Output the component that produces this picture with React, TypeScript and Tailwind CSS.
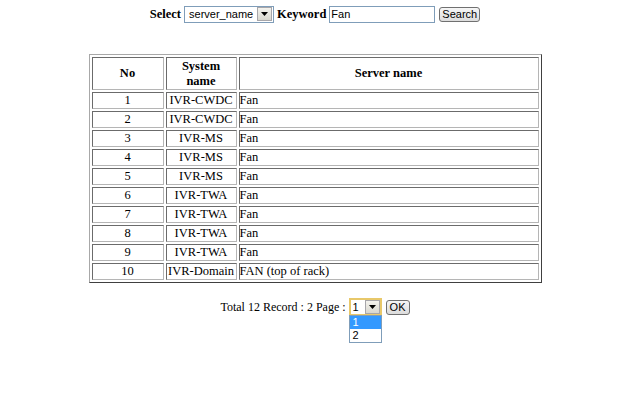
import React from "react";

const rows = [
  { no: 1, system: "IVR-CWDC", server: "Fan" },
  { no: 2, system: "IVR-CWDC", server: "Fan" },
  { no: 3, system: "IVR-MS", server: "Fan" },
  { no: 4, system: "IVR-MS", server: "Fan" },
  { no: 5, system: "IVR-MS", server: "Fan" },
  { no: 6, system: "IVR-TWA", server: "Fan" },
  { no: 7, system: "IVR-TWA", server: "Fan" },
  { no: 8, system: "IVR-TWA", server: "Fan" },
  { no: 9, system: "IVR-TWA", server: "Fan" },
  { no: 10, system: "IVR-Domain", server: "FAN (top of rack)" },
];

// small XP style drop arrow button used by the select boxes
const DropButton = () => (
  <div className="flex h-[14px] w-[15px] items-center justify-center border border-[#a7a6aa] bg-gradient-to-b from-[#f4f3ee] to-[#d8d7cf]">
    <svg width="7" height="4" viewBox="0 0 7 4">
      <path d="M0 0h7L3.5 4z" fill="#000" />
    </svg>
  </div>
);

const cell =
  "border border-t-[#6b6b6b] border-l-[#6b6b6b] border-b-[#b5b5b5] border-r-[#b5b5b5] p-0 leading-[15px]";

export default function App() {
  return (
    <div className="h-[395px] w-[644px] bg-white text-[12px] text-black" style={{ fontFamily: '"Liberation Serif", serif' }}>
      <div className="w-[630px]">
        {/* search form */}
        <div className="flex items-center justify-center pt-[5px] h-[23px]">
          <b className="mr-[3px] text-[12.5px]">Select</b>
          <div className="flex h-[17px] w-[90px] items-center justify-between border border-[#7f9db9] bg-white pl-[4px] pr-[1px]">
            <span className="text-[11px]" style={{ fontFamily: '"Liberation Sans", sans-serif' }}>server_name</span>
            <DropButton />
          </div>
          <b className="mx-[3px] text-[12.5px]">Keyword</b>
          <div className="flex h-[17px] w-[106px] items-center border border-[#7f9db9] bg-white pl-[1px]">
            <span className="text-[11px]" style={{ fontFamily: '"Liberation Sans", sans-serif' }}>Fan</span>
          </div>
          <div
            className="ml-[4px] flex h-[15px] items-center rounded-[3px] border border-[#707070] bg-gradient-to-b from-[#f6f6f6] to-[#dcdcdc] px-[2px] text-[11px]"
            style={{ fontFamily: '"Liberation Sans", sans-serif' }}
          >
            Search
          </div>
        </div>

        {/* results table */}
        <div className="mt-[31px] flex justify-center">
          <table className="w-[453px] border-separate border-spacing-[2px] border border-t-[#a8a8a8] border-l-[#a8a8a8] border-b-[#404040] border-r-[#404040] text-[12.5px]">
            <thead>
              <tr className="h-[33px]">
                <th className={`${cell} w-[72px] font-bold`}>No</th>
                <th className={`${cell} w-[71px] font-bold leading-[15px]`}>
                  System
                  <br />
                  name
                </th>
                <th className={`${cell} font-bold`}>Server name</th>
              </tr>
            </thead>
            <tbody>
              {rows.map((r) => (
                <tr key={r.no} className="h-[17px]">
                  <td className={`${cell} text-center`}>{r.no}</td>
                  <td className={`${cell} text-center`}>{r.system}</td>
                  <td className={`${cell} text-left`}>{r.server}</td>
                </tr>
              ))}
            </tbody>
          </table>
        </div>

        {/* paging */}
        <div className="mt-[15px] flex items-center justify-center">
          <span className="mr-[3px]">Total 12 Record : 2 Page :</span>
          <div className="relative">
            <div className="flex h-[18px] w-[33px] items-center justify-between border-2 border-[#e8c86a] bg-white pl-[2px]">
              <span className="text-[11px]" style={{ fontFamily: '"Liberation Sans", sans-serif' }}>1</span>
              <DropButton />
            </div>
            <div
              className="absolute left-0 top-[17px] w-[33px] border border-[#7f9db9] bg-white text-[11px]"
              style={{ fontFamily: '"Liberation Sans", sans-serif' }}
            >
              <div className="h-[13px] bg-[#3399ff] pl-[3px] leading-[13px] text-white">1</div>
              <div className="h-[13px] pl-[3px] leading-[13px]">2</div>
            </div>
          </div>
          <div
            className="ml-[4px] flex h-[15px] items-center rounded-[3px] border border-[#707070] bg-gradient-to-b from-[#f6f6f6] to-[#dcdcdc] px-[3px] text-[11px]"
            style={{ fontFamily: '"Liberation Sans", sans-serif' }}
          >
            OK
          </div>
        </div>
      </div>
    </div>
  );
}
